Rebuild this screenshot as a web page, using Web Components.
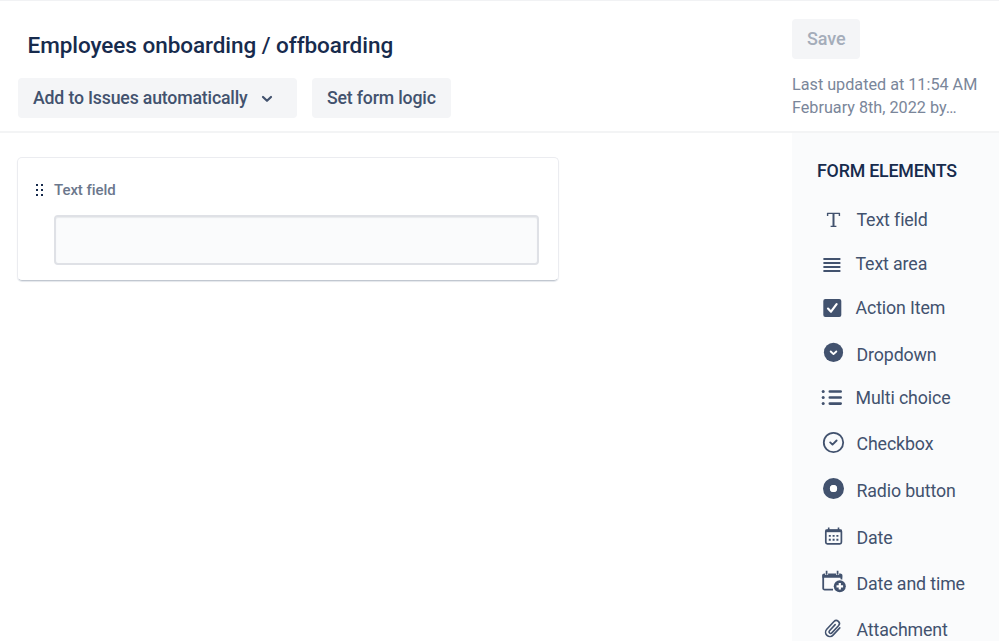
<!DOCTYPE html>
<html lang="en">
<head>
<meta charset="utf-8">
<title>Form builder</title>
<style>
    body {
        margin: 0;
        height: 641px;
        overflow: hidden;
        background: #fff;
        color: #42526e;
        font-family: Roboto, sans-serif;
    }
</style>
</head>
<body>
<form-builder>
    <builder-header slot="header" heading="Employees onboarding / offboarding">
        <action-button style="width: 279px" dropdown>Add to Issues automatically</action-button>
        <action-button style="width: 139px">Set form logic</action-button>
        <save-status slot="status">
            <span>Last updated at 11:54 AM</span>
            <span>February 8th, 2022 by…</span>
        </save-status>
    </builder-header>
    <field-card label="Text field"></field-card>
    <element-palette slot="palette" heading="FORM ELEMENTS">
        <palette-item icon="text" style="--rise: 2px">Text field</palette-item>
        <palette-item icon="area" style="--shift: -1px; --rise: 2px">Text area</palette-item>
        <palette-item icon="action" style="--shift: -1px; --rise: 2px">Action Item</palette-item>
        <palette-item icon="dropdown" style="margin-top: 2px">Dropdown</palette-item>
        <palette-item icon="multi" style="margin-top: -1px; --shift: -1px">Multi choice</palette-item>
        <palette-item icon="checkbox" style="margin-top: 3px; --rise: 2px">Checkbox</palette-item>
        <palette-item icon="radio" style="margin-top: 2px">Radio button</palette-item>
        <palette-item icon="date" style="margin-top: 3px">Date</palette-item>
        <palette-item icon="datetime" style="margin-top: 2px">Date and time</palette-item>
        <palette-item icon="attachment" style="margin-top: 3px; --rise: 2px">Attachment</palette-item>
    </element-palette>
</form-builder>

<script>
// 28x28 icons, keyed by the palette-item "icon" attribute
const ICONS = {
    text: `<path d="M8.2 7.4h12.6M8.6 7v3M20.4 7v3M11.6 20.4h5.8" fill="none" stroke="currentColor" stroke-width="1.4"/><path d="M14.5 7.4v12.8" stroke="currentColor" stroke-width="2"/>`,
    area: `<path d="M4.4 9h17M4.4 13h17M4.4 17h17M4.4 21h17" fill="none" stroke="currentColor" stroke-width="2" transform="translate(0 -.1)"/>`,
    action: `<rect x="4.3" y="5" width="18" height="18" rx="2"/><path d="M9 14.6l3 3.1 5.6-7.5" fill="none" stroke="#fff" stroke-width="2.2" stroke-linecap="round" stroke-linejoin="round"/>`,
    dropdown: `<circle cx="14.5" cy="12.4" r="9.6"/><path d="M11.7 11.5l2.8 2.6 2.8-2.6" fill="none" stroke="#fff" stroke-width="1.9" stroke-linecap="round" stroke-linejoin="round"/>`,
    multi: `<circle cx="4.2" cy="8.5" r="1.5"/><circle cx="4.2" cy="14.5" r="1.5"/><circle cx="4.2" cy="20.6" r="1.5"/><path d="M10.8 8.5h10.9M10.8 14.5h10.9M10.8 20.6h10.9" fill="none" stroke="currentColor" stroke-width="2.6" stroke-linecap="round"/>`,
    checkbox: `<circle cx="14.5" cy="12.5" r="9.7" fill="none" stroke="currentColor" stroke-width="1.8"/><path d="M11.2 12.4l2.3 2.2 4.1-4.1" fill="none" stroke="currentColor" stroke-width="1.9" stroke-linecap="round" stroke-linejoin="round"/>`,
    radio: `<circle cx="14.5" cy="12.5" r="7" fill="none" stroke="currentColor" stroke-width="7"/><circle cx="14.5" cy="12.5" r="3.6" fill="#fff"/>`,
    date: `<rect x="6.8" y="7" width="15.6" height="13.9" rx="1.6" fill="none" stroke="currentColor" stroke-width="1.7"/><path d="M6.5 7.9h16.2" stroke="currentColor" stroke-width="2.6"/><path d="M9.7 4.6v3M19.5 4.6v3" stroke="currentColor" stroke-width="1.6"/><path d="M9.8 12.9h2M13.6 12.9h2M17.4 12.9h2M9.8 16.7h2M13.6 16.7h2M17.4 16.7h2" stroke="currentColor" stroke-width="1.9"/>`,
    datetime: `<path d="M14 20.6H5.6a1.4 1.4 0 0 1-1.4-1.4V5.6M22.4 5.6v5.2" fill="none" stroke="currentColor" stroke-width="1.8"/><path d="M3.4 6.4a1.8 1.8 0 0 1 1.8-1.8h16.2a1.8 1.8 0 0 1 1.8 1.8v2.4H3.4z"/><path d="M7.6 2v4M18.6 2v4" stroke="#fafbfc" stroke-width="3"/><path d="M7.6 1.8v4M18.6 1.8v4" stroke="currentColor" stroke-width="1.7"/><circle cx="20.8" cy="17.3" r="7" fill="#fafbfc"/><circle cx="20.8" cy="17.3" r="6"/><path d="M20.8 14v6.6M17.5 17.3h6.6" stroke="#fff" stroke-width="2.2"/>`,
    attachment: `<path transform="translate(14.3 12.4) rotate(43)" d="M4.4-4.8V5.1a4.3 4.3 0 0 1-8.6 0V-5.5a3.1 3.1 0 0 1 6.2 0V4.3a1.6 1.6 0 0 1-3.2 0V-4" fill="none" stroke="currentColor" stroke-width="1.6" stroke-linecap="round"/>`
};

class FormBuilder extends HTMLElement {
    constructor() {
        super();
        this.attachShadow({ mode: 'open' }).innerHTML = `
        <style>
            :host {
                display: flex;
                flex-direction: column;
                height: 641px;
            }

            .body {
                display: flex;
                flex: 1;
                min-height: 0;
            }

            main {
                flex: 1;
                padding: 24px 17px;
            }
        </style>
        <slot name="header"></slot>
        <div class="body">
            <main><slot></slot></main>
            <slot name="palette"></slot>
        </div>`;
    }
}

class BuilderHeader extends HTMLElement {
    connectedCallback() {
        this.attachShadow({ mode: 'open' }).innerHTML = `
        <style>
            :host {
                display: flex;
                justify-content: space-between;
                box-sizing: border-box;
                height: 133px;
                flex: none;
                border-top: 1px solid #f1f2f4;
                border-bottom: 2px solid #f3f4f5;
            }

            .left {
                padding: 29px 0 0 18px;
            }

            h1 {
                margin: 0 0 18px 9.5px;
                font-size: 22.5px;
                font-weight: 500;
                line-height: 30px;
                letter-spacing: -0.05px;
                color: #172b4d;
                white-space: nowrap;
            }

            .actions {
                display: flex;
                gap: 15px;
            }
        </style>
        <div class="left">
            <h1>${this.getAttribute('heading')}</h1>
            <div class="actions"><slot></slot></div>
        </div>
        <slot name="status"></slot>`;
    }
}

class ActionButton extends HTMLElement {
    connectedCallback() {
        const chevron = this.hasAttribute('dropdown')
            ? `<svg width="12" height="8" viewBox="0 0 12 8"><path d="M2 2l4 3.8L10 2" fill="none" stroke="currentColor" stroke-width="2.2" stroke-linecap="round" stroke-linejoin="round"/></svg>`
            : '';
        this.attachShadow({ mode: 'open' }).innerHTML = `
        <style>
            :host {
                display: block;
                height: 40px;
            }

            button {
                display: flex;
                align-items: center;
                gap: 13px;
                width: 100%;
                height: 100%;
                padding: 0 0 1px 15px;
                border: none;
                border-radius: 4px;
                background: #f4f5f7;
                color: inherit;
                font: 500 17.7px Roboto, sans-serif;
                letter-spacing: -0.17px;
                white-space: nowrap;
            }

            svg {
                margin-top: 3px;
            }

            :host([disabled]) button {
                color: #a5adba;
                font-size: 18px;
                letter-spacing: -0.1px;
            }
        </style>
        <button><span><slot></slot></span>${chevron}</button>`;
    }
}

class SaveStatus extends HTMLElement {
    constructor() {
        super();
        this.attachShadow({ mode: 'open' }).innerHTML = `
        <style>
            :host {
                display: flex;
                flex-direction: column;
                align-items: flex-start;
                box-sizing: border-box;
                width: 207px;
                padding-top: 18px;
                color: #7a869a;
                font-size: 16.2px;
                line-height: 23px;
                white-space: nowrap;
            }

            action-button {
                width: 68px;
                margin-bottom: 14px;
            }
        </style>
        <action-button disabled>Save</action-button>
        <slot></slot>`;
    }
}

class FieldCard extends HTMLElement {
    connectedCallback() {
        this.attachShadow({ mode: 'open' }).innerHTML = `
        <style>
            :host {
                display: block;
                box-sizing: border-box;
                width: 541.5px;
                height: 124px;
                padding: 19px 18.5px 0 18px;
                border: 1px solid #ebecf0;
                border-bottom-color: #c1c7d0;
                border-radius: 5px;
                box-shadow: 0 1px 1px #e4e7ec;
            }

            .title {
                display: flex;
                align-items: center;
                gap: 9px;
                height: 26px;
                margin-bottom: 12px;
                color: #6b778c;
                font-size: 15px;
                font-weight: 500;
                letter-spacing: -0.05px;
            }

            svg {
                fill: #172b4d;
            }

            .input {
                box-sizing: border-box;
                height: 50px;
                margin-left: 18px;
                border: 2px solid #dfe1e6;
                border-radius: 4px;
                background: #fafbfc;
                box-shadow: inset 0 1px 1px #e8eaed;
            }
        </style>
        <div class="title">
            <svg width="9" height="14" viewBox="0 0 9 14">
                <path d="M0 1h2v2H0zM5 1h2v2H5zM0 6h2v2H0zM5 6h2v2H5zM0 11h2v2H0zM5 11h2v2H5z"/>
            </svg>
            <span>${this.getAttribute('label')}</span>
        </div>
        <div class="input"></div>`;
    }
}

class ElementPalette extends HTMLElement {
    connectedCallback() {
        this.attachShadow({ mode: 'open' }).innerHTML = `
        <style>
            :host {
                display: flex;
                flex-direction: column;
                flex: none;
                width: 207px;
                overflow: hidden;
                background: #fafbfc;
            }

            h2 {
                margin: 26px 0 15px 25px;
                color: #172b4d;
                font-size: 17.8px;
                font-weight: 500;
                line-height: 24px;
                letter-spacing: -0.2px;
                white-space: nowrap;
            }
        </style>
        <h2>${this.getAttribute('heading')}</h2>
        <slot></slot>`;
    }
}

class PaletteItem extends HTMLElement {
    connectedCallback() {
        this.attachShadow({ mode: 'open' }).innerHTML = `
        <style>
            :host {
                display: flex;
                align-items: center;
                flex: none;
                height: 44px;
                padding-left: 27px;
                font-size: 17.8px;
                letter-spacing: -0.13px;
                white-space: nowrap;
            }

            svg {
                fill: currentColor;
            }

            span {
                margin-left: calc(9.5px + var(--shift, 0px));
                padding-bottom: var(--rise, 0px);
            }
        </style>
        <svg width="28" height="28" viewBox="0 0 28 28">${ICONS[this.getAttribute('icon')]}</svg>
        <span><slot></slot></span>`;
    }
}

customElements.define('form-builder', FormBuilder);
customElements.define('builder-header', BuilderHeader);
customElements.define('action-button', ActionButton);
customElements.define('save-status', SaveStatus);
customElements.define('field-card', FieldCard);
customElements.define('element-palette', ElementPalette);
customElements.define('palette-item', PaletteItem);
</script>
</body>
</html>
